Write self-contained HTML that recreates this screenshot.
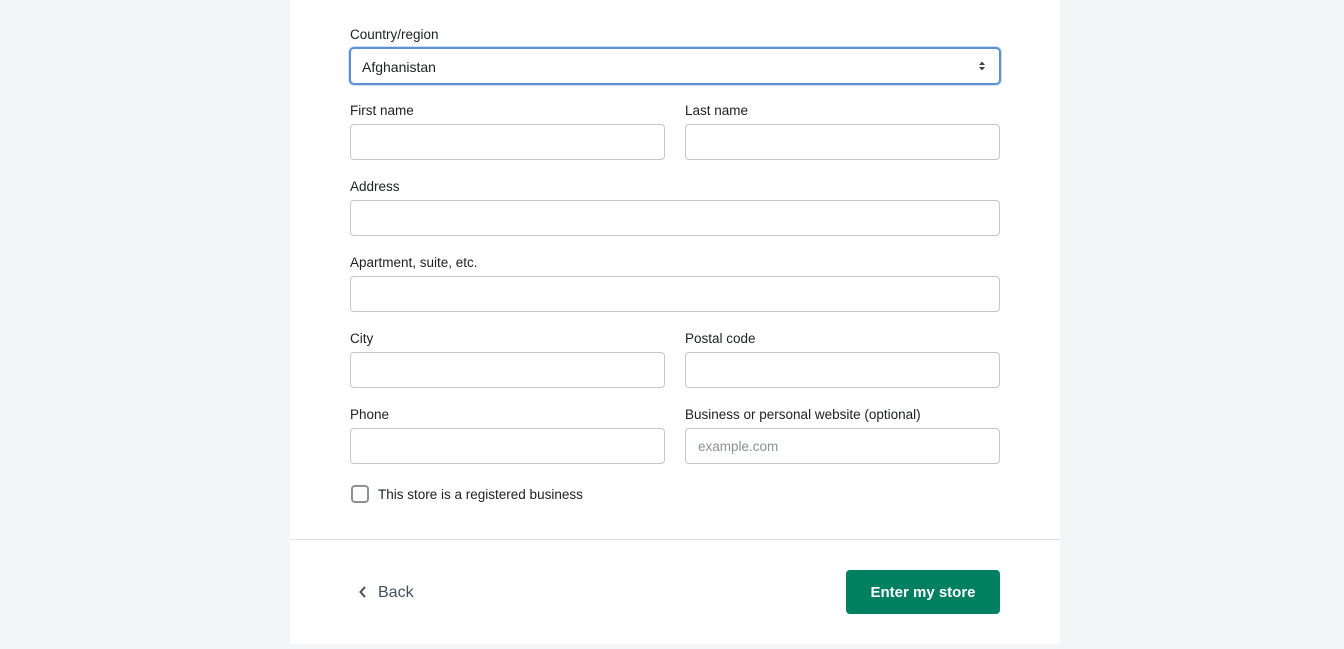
<!DOCTYPE html>
<html><head><style>
body{margin:0;width:1344px;height:649px;background:#f4f5f7;font-family:"Liberation Sans",sans-serif;position:relative;overflow:hidden}
.panel{position:absolute;left:290px;top:0;width:770px;height:644px;background:#fff}
.lbl{position:absolute;font-size:13.5px;color:#202223;line-height:16px}
.inp{position:absolute;height:34px;border:1px solid #c4c6c9;border-radius:4px;background:#fff;box-sizing:border-box}
.div{position:absolute;left:290px;top:539px;width:770px;height:1px;background:#e1e3e5}
</style></head><body>
<div class="panel"></div>
<div class="lbl" style="left:350px;top:27px">Country/region</div>
<div class="inp" style="left:349px;top:47px;width:652px;height:38px;border:2px solid #5c8fd6;border-radius:5px;box-shadow:0 0 0 1px #cfe0f5"></div>
<div class="lbl" style="left:362px;top:59px;font-size:14px">Afghanistan</div>
<svg style="position:absolute;left:978px;top:60px" width="8" height="12" viewBox="0 0 8 12"><path d="M1 5L4 1.5L7 5Z M1 7L4 10.5L7 7Z" fill="#444"/></svg>

<div class="lbl" style="left:350px;top:103px">First name</div>
<div class="lbl" style="left:685px;top:103px">Last name</div>
<div class="inp" style="left:350px;top:124px;width:315px;height:36px"></div>
<div class="inp" style="left:685px;top:124px;width:315px;height:36px"></div>

<div class="lbl" style="left:350px;top:179px">Address</div>
<div class="inp" style="left:350px;top:200px;width:650px;height:36px"></div>

<div class="lbl" style="left:350px;top:255px">Apartment, suite, etc.</div>
<div class="inp" style="left:350px;top:276px;width:650px;height:36px"></div>

<div class="lbl" style="left:350px;top:331px">City</div>
<div class="lbl" style="left:685px;top:331px">Postal code</div>
<div class="inp" style="left:350px;top:352px;width:315px;height:36px"></div>
<div class="inp" style="left:685px;top:352px;width:315px;height:36px"></div>

<div class="lbl" style="left:350px;top:407px">Phone</div>
<div class="lbl" style="left:685px;top:407px">Business or personal website (optional)</div>
<div class="inp" style="left:350px;top:428px;width:315px;height:36px"></div>
<div class="inp" style="left:685px;top:428px;width:315px;height:36px"></div>
<div class="lbl" style="left:698px;top:439px;color:#8c9196">example.com</div>

<div style="position:absolute;left:351px;top:485px;width:18px;height:18px;border:2px solid #8c9196;border-radius:4px;box-sizing:border-box"></div>
<div class="lbl" style="left:378px;top:487px">This store is a registered business</div>

<div class="div"></div>
<svg style="position:absolute;left:358px;top:585px" width="10" height="14" viewBox="0 0 10 14"><path d="M7 2L2.5 7L7 12" stroke="#454f5b" stroke-width="2" fill="none"/></svg>
<div class="lbl" style="left:378px;top:585px;font-size:16px;color:#454f5b">Back</div>
<div style="position:absolute;left:846px;top:570px;width:154px;height:44px;background:#008060;border-radius:4px;color:#fff;font-weight:bold;font-size:15px;line-height:46px;text-align:center">Enter my store</div>
</body></html>
